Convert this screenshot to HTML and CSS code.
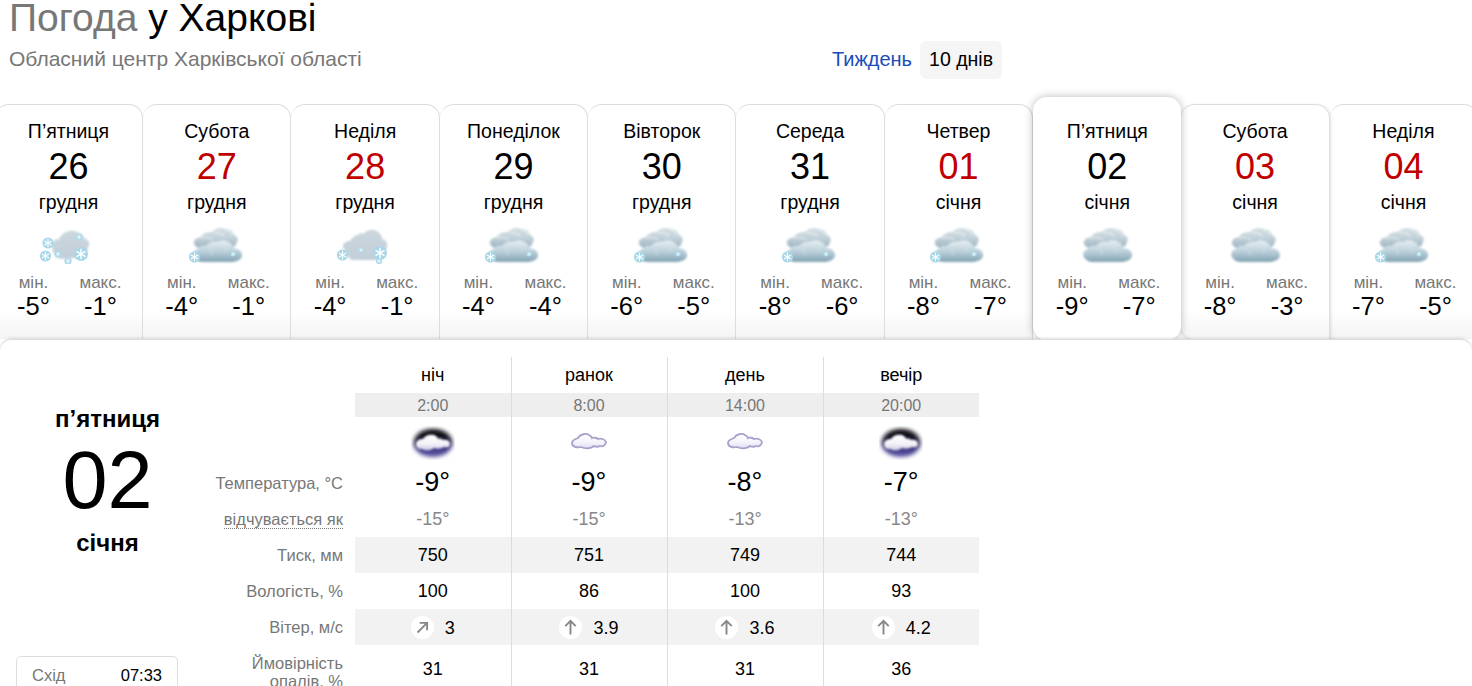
FILE: index.html
```html
<!DOCTYPE html>
<html lang="uk">
<head>
<meta charset="utf-8">
<title>Погода у Харкові</title>
<link rel="stylesheet" href="styles.css">
</head>
<body>
<svg class="defs" width="0" height="0" aria-hidden="true">
  <defs>
    <linearGradient id="gBack" x1="0" y1="0" x2="0" y2="1"><stop offset="0" stop-color="#d5e0e5"/><stop offset=".5" stop-color="#c3d2da"/><stop offset="1" stop-color="#9db4c0"/></linearGradient>
    <linearGradient id="gFront" x1="0" y1="0" x2="0" y2="1"><stop offset="0" stop-color="#e8f0f3"/><stop offset=".55" stop-color="#b7cdd8"/><stop offset="1" stop-color="#82a2b2"/></linearGradient>
    <linearGradient id="gPale" x1="0" y1="0" x2="0" y2="1"><stop offset="0" stop-color="#cbd7dd"/><stop offset="1" stop-color="#c3ced8"/></linearGradient>
    <linearGradient id="gNight" x1="0" y1="0" x2="0" y2="1"><stop offset="0" stop-color="#000"/><stop offset=".4" stop-color="#1e1c33"/><stop offset=".7" stop-color="#3f3a86"/><stop offset="1" stop-color="#5f5ba6"/></linearGradient>
    <linearGradient id="gWisp" x1="0" y1="0" x2="0" y2="1"><stop offset="0" stop-color="#fff"/><stop offset=".6" stop-color="#f3f2f8"/><stop offset="1" stop-color="#c9c6e2"/></linearGradient>
    <linearGradient id="gDay" x1="0" y1="0" x2="0" y2="1"><stop offset="0" stop-color="#fff"/><stop offset=".6" stop-color="#f4f3fa"/><stop offset="1" stop-color="#dcdaf0"/></linearGradient>
    <filter id="soft" x="-10%" y="-10%" width="120%" height="120%"><feGaussianBlur stdDeviation=".8"/></filter>
    <filter id="soft2" x="-20%" y="-20%" width="140%" height="140%"><feGaussianBlur stdDeviation="2"/></filter>
    <filter id="softS" x="-20%" y="-20%" width="140%" height="140%"><feGaussianBlur stdDeviation=".45"/></filter>

    <g id="backCloud">
      <path d="M5 20c-1-4 2-6 7-7 2-4 7-5 11-5 3-4 9-5 14-3 4 0 7 2 8 6 3 1 5 4 3 7-1 4-4 6-8 6H11c-3 0-5-2-6-4z" fill="url(#gBack)"/>
      <path d="M12 14c4-1 9 0 12 2M24 9c4-1 8 0 11 3M36 6c3 0 6 2 7 5" fill="none" stroke="#e6edf0" stroke-width="1.2"/>
    </g>
    <g id="frontCloud">
      <path d="M5 33c-2-3 0-7 4-8 1-3 5-4 8-3 2-3 7-5 12-4 2-2 7-2 10 0 3 1 5 4 5 6 5 0 9 3 9 7 0 4-4 6-9 7H13c-4 0-7-3-8-5z" fill="url(#gFront)"/>
      <path d="M18 24c3 1 5 3 5 7M31 20c4 1 6 4 6 8" fill="none" stroke="#d2e0e6" stroke-width="1"/>
    </g>
    <g id="flake">
      <circle r="5.6" fill="#a8d8e8"/>
      <path d="M0-4.2V4.2M-3.6-2.1 3.6 2.1M-3.6 2.1 3.6-2.1" stroke="#fff" stroke-width="1.1" fill="none"/>
    </g>

    <symbol id="iClouds" viewBox="0 0 56 40">
      <g filter="url(#soft)"><use href="#backCloud"/><use href="#frontCloud"/></g>
    </symbol>
    <symbol id="iSnow1" viewBox="0 0 56 40">
      <g filter="url(#soft)"><use href="#backCloud"/><use href="#frontCloud"/></g>
      <g filter="url(#softS)"><use href="#flake" transform="translate(5.5 33)"/><use href="#flake" transform="translate(44 30) scale(.45)"/></g>
    </symbol>
    <symbol id="iSnow2" viewBox="0 0 56 40">
      <g filter="url(#soft)"><path d="M7 25c-3-3 0-8 6-8 3-5 9-8 15-8 3-4 9-4 13-1 3 2 4 5 4 7 3 1 6 3 5 7-1 5-4 13-10 14H16c-4 0-7-7-9-11z" fill="url(#gPale)"/></g>
      <g filter="url(#softS)"><use href="#flake" transform="translate(5.5 31)"/><use href="#flake" transform="translate(24 26) scale(.5)"/><use href="#flake" transform="translate(43 29) scale(1.25)"/><use href="#flake" transform="translate(42 37) scale(.55)"/></g>
    </symbol>
    <symbol id="iSnow3" viewBox="0 0 56 40">
      <g filter="url(#soft)"><path d="M12 24c-2-4 2-9 7-9 3-6 9-9 15-8 5 1 9 3 10 7 3 1 6 4 5 7s-2 9-7 11-20 4-24 2-5-7-6-10z" fill="url(#gPale)"/></g>
      <g filter="url(#softS)"><use href="#flake" transform="translate(8 19)"/><use href="#flake" transform="translate(5.5 32)"/><use href="#flake" transform="translate(18 30) scale(.6)"/><use href="#flake" transform="translate(28 37) scale(.65)"/><use href="#flake" transform="translate(41 30) scale(1.25)"/><use href="#flake" transform="translate(39 13) scale(.6)"/></g>
    </symbol>
    <symbol id="iNight" viewBox="0 0 44 34">
      <ellipse cx="22" cy="17" rx="19.5" ry="14" fill="url(#gNight)" filter="url(#soft2)"/>
      <path d="M5 18c0-3 3-5 7-5 2-4 7-5 11-4 2 1 4 2 4 4 2-1 4 0 5 1 4-1 7 1 7 4s-3 4-6 3c-3 2-7 2-10 1-3 3-9 3-12 1-4 1-6-2-6-5z" fill="url(#gWisp)" filter="url(#soft)"/>
    </symbol>
    <symbol id="iDay" viewBox="0 0 44 24">
      <path d="M5 13c0-3 3-4 6-5 2-4 8-5 11-3 2 1 3 2 3 3 2-1 5 0 6 1 3-1 7 0 8 3 0 3-3 5-6 4-2 1-4 1-6 0-3 3-9 3-13 1-4 1-9 0-9-4z" fill="url(#gDay)" stroke="#a5a2cc" stroke-width="1.8" filter="url(#softS)"/>
    </symbol>
  </defs>
</svg>

<div class="page">
  <header class="header">
    <div class="heading">
      <h1 class="title"><span class="title-muted">Погода</span> у Харкові</h1>
      <p class="subtitle">Обласний центр Харківської області</p>
    </div>
    <nav class="range">
      <a class="range-link" href="#">Тиждень</a>
      <span class="range-current">10 днів</span>
    </nav>
  </header>

  <section class="tabs">
    <article class="tab">
      <div class="tab-day">П’ятниця</div><div class="tab-date">26</div><div class="tab-month">грудня</div>
      <svg class="tab-icon"><use href="#iSnow3"/></svg>
      <div class="range-temps"><div class="rt"><span class="rt-label">мін.</span><span class="rt-value">-5°</span></div><div class="rt"><span class="rt-label">макс.</span><span class="rt-value">-1°</span></div></div>
    </article>
    <article class="tab">
      <div class="tab-day">Субота</div><div class="tab-date red">27</div><div class="tab-month">грудня</div>
      <svg class="tab-icon"><use href="#iSnow1"/></svg>
      <div class="range-temps"><div class="rt"><span class="rt-label">мін.</span><span class="rt-value">-4°</span></div><div class="rt"><span class="rt-label">макс.</span><span class="rt-value">-1°</span></div></div>
    </article>
    <article class="tab">
      <div class="tab-day">Неділя</div><div class="tab-date red">28</div><div class="tab-month">грудня</div>
      <svg class="tab-icon"><use href="#iSnow2"/></svg>
      <div class="range-temps"><div class="rt"><span class="rt-label">мін.</span><span class="rt-value">-4°</span></div><div class="rt"><span class="rt-label">макс.</span><span class="rt-value">-1°</span></div></div>
    </article>
    <article class="tab">
      <div class="tab-day">Понеділок</div><div class="tab-date">29</div><div class="tab-month">грудня</div>
      <svg class="tab-icon"><use href="#iSnow1"/></svg>
      <div class="range-temps"><div class="rt"><span class="rt-label">мін.</span><span class="rt-value">-4°</span></div><div class="rt"><span class="rt-label">макс.</span><span class="rt-value">-4°</span></div></div>
    </article>
    <article class="tab">
      <div class="tab-day">Вівторок</div><div class="tab-date">30</div><div class="tab-month">грудня</div>
      <svg class="tab-icon"><use href="#iSnow1"/></svg>
      <div class="range-temps"><div class="rt"><span class="rt-label">мін.</span><span class="rt-value">-6°</span></div><div class="rt"><span class="rt-label">макс.</span><span class="rt-value">-5°</span></div></div>
    </article>
    <article class="tab">
      <div class="tab-day">Середа</div><div class="tab-date">31</div><div class="tab-month">грудня</div>
      <svg class="tab-icon"><use href="#iSnow1"/></svg>
      <div class="range-temps"><div class="rt"><span class="rt-label">мін.</span><span class="rt-value">-8°</span></div><div class="rt"><span class="rt-label">макс.</span><span class="rt-value">-6°</span></div></div>
    </article>
    <article class="tab">
      <div class="tab-day">Четвер</div><div class="tab-date red">01</div><div class="tab-month">січня</div>
      <svg class="tab-icon"><use href="#iSnow1"/></svg>
      <div class="range-temps"><div class="rt"><span class="rt-label">мін.</span><span class="rt-value">-8°</span></div><div class="rt"><span class="rt-label">макс.</span><span class="rt-value">-7°</span></div></div>
    </article>
    <article class="tab tab-active">
      <div class="tab-day">П’ятниця</div><div class="tab-date">02</div><div class="tab-month">січня</div>
      <svg class="tab-icon"><use href="#iClouds"/></svg>
      <div class="range-temps"><div class="rt"><span class="rt-label">мін.</span><span class="rt-value">-9°</span></div><div class="rt"><span class="rt-label">макс.</span><span class="rt-value">-7°</span></div></div>
    </article>
    <article class="tab tab-after">
      <div class="tab-day">Субота</div><div class="tab-date red">03</div><div class="tab-month">січня</div>
      <svg class="tab-icon"><use href="#iClouds"/></svg>
      <div class="range-temps"><div class="rt"><span class="rt-label">мін.</span><span class="rt-value">-8°</span></div><div class="rt"><span class="rt-label">макс.</span><span class="rt-value">-3°</span></div></div>
    </article>
    <article class="tab">
      <div class="tab-day">Неділя</div><div class="tab-date red">04</div><div class="tab-month">січня</div>
      <svg class="tab-icon"><use href="#iSnow1"/></svg>
      <div class="range-temps"><div class="rt"><span class="rt-label">мін.</span><span class="rt-value">-7°</span></div><div class="rt"><span class="rt-label">макс.</span><span class="rt-value">-5°</span></div></div>
    </article>
  </section>

  <main class="panel">
    <aside class="side">
      <div class="side-day">п’ятниця</div>
      <div class="side-date">02</div>
      <div class="side-month">січня</div>
      <div class="sun-card">
        <div class="sun-row"><span class="sun-label">Схід</span><span>07:33</span></div>
      </div>
    </aside>
    <table class="day-table">
      <tbody>
        <tr class="r-head"><th class="lbl"></th><td>ніч</td><td>ранок</td><td>день</td><td>вечір</td></tr>
        <tr class="r-time"><th class="lbl"></th><td>2:00</td><td>8:00</td><td>14:00</td><td>20:00</td></tr>
        <tr class="r-icon"><th class="lbl"></th>
          <td><svg class="ic-night"><use href="#iNight"/></svg></td>
          <td><svg class="ic-day"><use href="#iDay"/></svg></td>
          <td><svg class="ic-day"><use href="#iDay"/></svg></td>
          <td><svg class="ic-night"><use href="#iNight"/></svg></td></tr>
        <tr class="r-temp"><th class="lbl">Температура, °C</th><td>-9°</td><td>-9°</td><td>-8°</td><td>-7°</td></tr>
        <tr class="r-feels"><th class="lbl"><span class="dotted">відчувається як</span></th><td>-15°</td><td>-15°</td><td>-13°</td><td>-13°</td></tr>
        <tr class="r-std r-shade"><th class="lbl">Тиск, мм</th><td>750</td><td>751</td><td>749</td><td>744</td></tr>
        <tr class="r-std"><th class="lbl">Вологість, %</th><td>100</td><td>86</td><td>100</td><td>93</td></tr>
        <tr class="r-std r-shade"><th class="lbl">Вітер, м/с</th>
          <td><div class="wind"><span class="wind-dot"><svg class="wind-arrow ne" viewBox="0 0 24 24"><path d="M12 20V5M6 10.5 12 4.5l6 6"/></svg></span><span class="wind-val">3</span></div></td>
          <td><div class="wind"><span class="wind-dot"><svg class="wind-arrow" viewBox="0 0 24 24"><path d="M12 20V5M6 10.5 12 4.5l6 6"/></svg></span><span class="wind-val">3.9</span></div></td>
          <td><div class="wind"><span class="wind-dot"><svg class="wind-arrow" viewBox="0 0 24 24"><path d="M12 20V5M6 10.5 12 4.5l6 6"/></svg></span><span class="wind-val">3.6</span></div></td>
          <td><div class="wind"><span class="wind-dot"><svg class="wind-arrow" viewBox="0 0 24 24"><path d="M12 20V5M6 10.5 12 4.5l6 6"/></svg></span><span class="wind-val">4.2</span></div></td></tr>
        <tr class="r-std r-rain"><th class="lbl">Ймовірність опалів, %</th><td>31</td><td>31</td><td>31</td><td>36</td></tr>
      </tbody>
    </table>
  </main>
</div>
</body>
</html>
```
FILE: styles.css
```css
* { box-sizing: border-box; }
html, body { margin: 0; height: 100%; overflow: hidden; background: #fff; }
body { font-family: "Liberation Sans", Arial, sans-serif; color: #000; }
.defs { position: absolute; }
.page { height: 686px; overflow: hidden; }

.header { display: flex; justify-content: space-between; width: 1002px; height: 104px; padding-left: 9px; }
.title { margin: 0; font-size: 39px; line-height: 36px; font-weight: 400; }
.title-muted { color: #777; }
.subtitle { margin: 11px 0 0; font-size: 21px; line-height: 24px; color: #777; }
.range { display: flex; align-items: center; gap: 8px; height: 38px; margin-top: 41px; font-size: 20px; }
.range-link { padding-bottom: 2px; color: #1a4db8; text-decoration: none; }
.range-current { display: flex; align-items: center; height: 38px; padding: 0 9px 2px; background: #f5f5f5; border-radius: 6px; font-size: 19.5px; }

.tabs { display: flex; height: 235px; margin-left: -5.2px; width: 1490px; position: relative; z-index: 1; }
.tab { flex: 0 0 148.33px; height: 235px; padding-top: 14px; text-align: center; background: linear-gradient(#fff 205px, #f3f3f3 235px); border: 1px solid #ddd; border-bottom: 0; border-left-width: 0; border-radius: 14px 14px 0 0; }
.tab-active { position: relative; z-index: 3; height: 243px; margin-top: -7px; padding-top: 22px; background: #fff; border: 0; border-radius: 14px; box-shadow: 0 0 9px rgba(0, 0, 0, .28); }
.tab-after { position: relative; z-index: 2; border-radius: 14px 14px 0 14px; box-shadow: 0 2px 4px rgba(0, 0, 0, .18); }
.tab-day { font-size: 19.5px; line-height: 24px; }
.tab-date { font-size: 36px; line-height: 44px; margin-top: 2px; }
.red { color: #c00000; }
.tab-month { font-size: 19.5px; line-height: 24px; margin-top: 1px; }
.tab-icon { display: block; width: 56px; height: 40px; margin: 10px auto 0; }
.range-temps { display: grid; grid-template-columns: 67px 67px; justify-content: center; margin-top: 10px; padding-right: 3px; }
.rt { display: flex; flex-direction: column; }
.rt-label { font-size: 17px; line-height: 18px; color: #777; }
.rt-value { font-size: 25.5px; line-height: 28px; }

.panel { display: flex; position: relative; z-index: 2; height: 400px; padding-top: 17px; background: #fff; border-top: 1px solid #ddd; border-radius: 12px 12px 0 0; box-shadow: 0 -1px 3px rgba(0, 0, 0, .12); }
.side { flex: 0 0 215px; text-align: center; }
.side-day { margin-top: 49px; font-size: 24px; line-height: 26px; font-weight: 700; }
.side-date { font-size: 81px; line-height: 96px; }
.side-month { margin-top: 2px; font-size: 24px; line-height: 26px; font-weight: 700; }
.sun-card { width: 162px; height: 80px; margin: 100px 0 0 16px; padding: 6px 15px; border: 1px solid #ddd; border-radius: 5px; font-size: 16.5px; }
.sun-row { display: flex; justify-content: space-between; line-height: 24px; }
.sun-label { color: #777; }

.day-table { border-collapse: collapse; table-layout: fixed; width: 764px; height: 0; }
.day-table td { width: 156px; padding: 0; text-align: center; vertical-align: middle; font-size: 18px; }
.day-table td + td { border-left: 1px solid #ddd; }
.lbl { width: 140px; padding: 0 12px 0 0; text-align: right; font-size: 16.5px; line-height: 18px; font-weight: 400; color: #777; }
.r-head { height: 36px; }
.r-time { height: 24px; }
.day-table .r-time td { padding-top: 1px; background: #eee; color: #777; font-size: 16px; }
.r-icon { height: 48px; }
.r-temp { height: 36px; }
.day-table .r-temp td { padding-bottom: 2px; font-size: 27px; }
.r-feels { height: 36px; }
.day-table .r-feels td { color: #888; font-size: 18px; }
.dotted { border-bottom: 1px dotted #777; }
.r-std { height: 36px; }
.r-shade td { background: #f2f2f2; }
.r-rain { height: 48px; }
.r-rain .lbl { padding-top: 6px; }
.ic-night { display: block; width: 44px; height: 34px; margin: 4px auto 0; }
.ic-day { display: block; width: 44px; height: 24px; margin: 2px auto 0; }
.wind { display: flex; justify-content: center; align-items: center; gap: 10px; }
.wind-dot { display: flex; align-items: center; justify-content: center; width: 23px; height: 23px; background: #fff; border-radius: 50%; }
.wind-val { padding: 2px 0 0 1px; }
.wind-arrow { width: 21px; height: 21px; fill: none; stroke: #888; stroke-width: 2.2; }
.wind-arrow.ne { transform: rotate(45deg); }
```
